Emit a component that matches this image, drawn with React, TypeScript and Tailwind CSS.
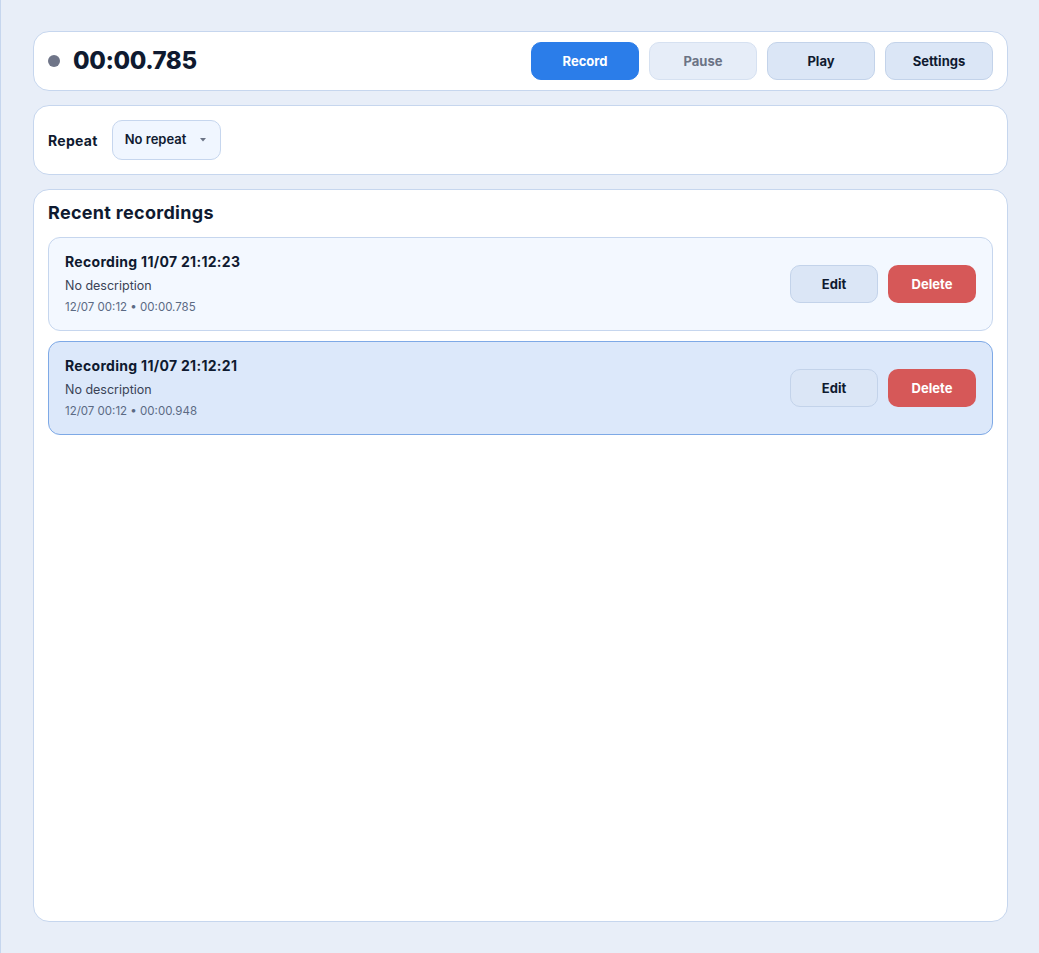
import React from "react";

const font = { fontFamily: "Inter, 'Noto Sans', sans-serif" };

function Btn({ children, cls }: { children: React.ReactNode; cls: string }) {
  return (
    <button className={`h-[38px] w-[108px] rounded-[10px] border pt-[2px] text-[13px] font-bold ${cls}`}>{children}</button>
  );
}

function RecCard({ title, meta, selected }: { title: string; meta: string; selected?: boolean }) {
  return (
    <div
      className={`flex items-center justify-between rounded-[12px] border pl-4 pr-4 pt-[14px] pb-[14px] ${
        selected ? "bg-[#dce8fa] border-[#7ea9e6]" : "bg-[#f3f8ff] border-[#c6d6ee]"
      }`}
    >
      <div className="flex flex-col">
        <div className="text-[14px] leading-[20px] font-bold tracking-[0.3px] text-[#0f1a30]">{title}</div>
        <div className="mt-[4px] text-[12.5px] leading-[20px] text-[#3a4356]">No description</div>
        <div className="mt-[2px] text-[11.5px] leading-[18px] text-[#5b6a84]">{meta}</div>
      </div>
      <div className="flex gap-[10px]">
        <button className="h-[38px] w-[88px] rounded-[10px] border border-[#c3d3ea] bg-[#dbe6f6] pt-[2px] text-[13px] font-bold text-[#0f1a30]">
          Edit
        </button>
        <button className="h-[38px] w-[88px] rounded-[10px] bg-[#d65858] pt-[2px] text-[13px] font-bold text-white">
          Delete
        </button>
      </div>
    </div>
  );
}

export default function App() {
  return (
    <div
      style={font}
      className="min-h-screen h-[953px] flex flex-col gap-[14px] bg-[#e8eef8] border-l border-[#c6d6ee] pl-8 pr-[31px] pt-[31px] pb-[31px]"
    >
      <div className="flex h-[60px] items-center justify-between rounded-[16px] border border-[#c6d6ee] bg-white pl-[14px] pr-[14px]">
        <div className="flex items-center gap-[13px]">
          <div className="h-[12px] w-[12px] rounded-full bg-[#6f7588]" />
          <div className="text-[24px] font-extrabold tracking-[-0.4px] text-[#0f1a30]">00:00.785</div>
        </div>
        <div className="flex gap-[10px]">
          <Btn cls="bg-[#2b7de9] border-[#2b7de9] text-white">Record</Btn>
          <Btn cls="bg-[#e6edf8] border-[#d6e1f1] text-[#6b7385]">Pause</Btn>
          <Btn cls="bg-[#dbe6f6] border-[#c3d3ea] text-[#0f1a30]">Play</Btn>
          <Btn cls="bg-[#dbe6f6] border-[#c3d3ea] text-[#0f1a30]">Settings</Btn>
        </div>
      </div>

      <div className="flex h-[70px] items-center gap-[14px] rounded-[16px] border border-[#c6d6ee] bg-white pl-[14px]">
        <div className="text-[14px] font-bold tracking-[0.3px] text-[#0f1a30]">Repeat</div>
        <div className="flex h-[40px] w-[109px] items-center justify-between rounded-[10px] border border-[#c6d6ee] bg-[#f0f6ff] pl-[12px] pr-[14px]">
          <span className="text-[13px] font-semibold text-[#0f1a30]">No repeat</span>
          <svg width="6" height="4" viewBox="0 0 6 4">
            <path d="M0 0 L6 0 L3 3.5 Z" fill="#6b7385" />
          </svg>
        </div>
      </div>

      <div className="flex flex-1 flex-col rounded-[16px] border border-[#c6d6ee] bg-white px-[14px] pt-[14px]">
        <div className="mb-[15px] text-[18px] leading-[18px] font-bold tracking-[0.3px] text-[#0f1a30]">Recent recordings</div>
        <div className="flex flex-col gap-[10px]">
          <RecCard title="Recording 11/07 21:12:23" meta="12/07 00:12 • 00:00.785" />
          <RecCard title="Recording 11/07 21:12:21" meta="12/07 00:12 • 00:00.948" selected />
        </div>
      </div>
    </div>
  );
}
